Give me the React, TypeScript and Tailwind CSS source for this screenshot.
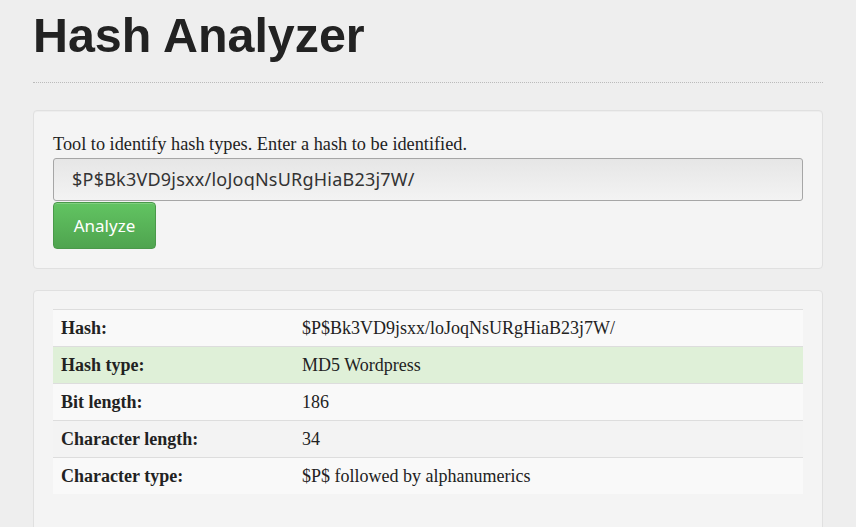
import React from "react";

const rows: { label: string; value: string; bg: string }[] = [
  { label: "Hash:", value: "$P$Bk3VD9jsxx/loJoqNsURgHiaB23j7W/", bg: "bg-[#f9f9f9]" },
  { label: "Hash type:", value: "MD5 Wordpress", bg: "bg-[#dff0d8]" },
  { label: "Bit length:", value: "186", bg: "bg-[#f9f9f9]" },
  { label: "Character length:", value: "34", bg: "bg-[#f3f3f3]" },
  { label: "Character type:", value: "$P$ followed by alphanumerics", bg: "bg-[#f9f9f9]" },
];

export default function App() {
  return (
    <div className="min-h-[527px] w-[856px] bg-[#eeeeee] px-[33px] pt-[9px] overflow-hidden">
      <h1
        className="text-[48.4px] leading-[53px] font-bold text-[#222222]"
        style={{ fontFamily: '"Liberation Sans", Arial, sans-serif' }}
      >
        Hash Analyzer
      </h1>
      <div className="mt-[20px] border-b border-dotted border-[#bbbbbb]" />

      <div className="mt-[27px] rounded-[4px] border border-[#e0e0e0] bg-[#f4f4f4] px-[19px] pt-[21px] pb-[19px] shadow-[inset_0_1px_1px_rgba(0,0,0,0.03)]">
        <p
          className="text-[18.3px] leading-[24px] text-[#222222]"
          style={{ fontFamily: '"Liberation Serif", "Times New Roman", serif' }}
        >
          Tool to identify hash types. Enter a hash to be identified.
        </p>
        <div
          className="mt-[2px] flex h-[43px] items-center rounded-[3px] border border-[#a6a6a6] bg-gradient-to-b from-[#e6e6e6] to-[#f3f3f3] px-[18px] text-[18px] tracking-[0.22px] text-[#333333]"
          style={{ fontFamily: '"Noto Sans", Lato, sans-serif' }}
        >
          $P$Bk3VD9jsxx/loJoqNsURgHiaB23j7W/
        </div>
        <button
          className="mt-[1px] h-[47px] w-[103px] rounded-[4px] border border-[#4a994a] bg-gradient-to-b from-[#62c462] to-[#4fa44f] text-[17px] text-white shadow-[inset_0_1px_0_rgba(255,255,255,0.2)]"
          style={{ fontFamily: '"Noto Sans", Lato, sans-serif' }}
        >
          Analyze
        </button>
      </div>

      <div className="mt-[21px] rounded-[4px] border border-[#e0e0e0] bg-[#f4f4f4] px-[19px] pt-[18px] pb-[40px]">
        <div
          className="text-[18px] text-[#222222]"
          style={{ fontFamily: '"Liberation Serif", "Times New Roman", serif' }}
        >
          {rows.map((r) => (
            <div
              key={r.label}
              className={`grid grid-cols-[249px_1fr] h-[37px] items-center border-t border-[#dddddd] ${r.bg}`}
            >
              <div className="pl-[8px] font-bold">{r.label}</div>
              <div>{r.value}</div>
            </div>
          ))}
        </div>
      </div>
    </div>
  );
}
